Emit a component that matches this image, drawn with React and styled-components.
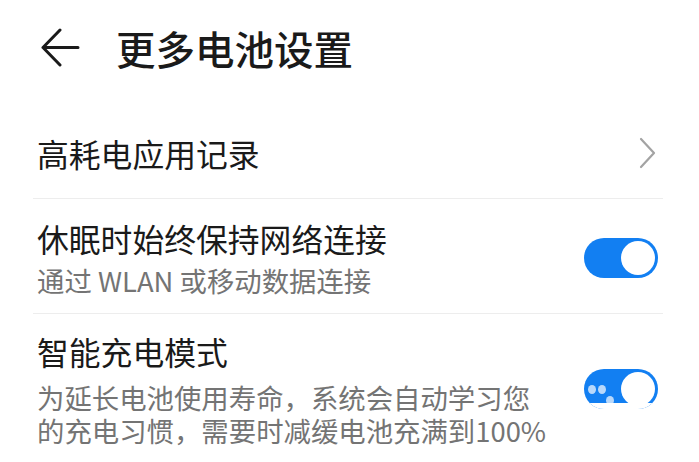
import React from "react";
import styled, { createGlobalStyle } from "styled-components";

const GlobalStyle = createGlobalStyle`
  body {
    margin: 0;
    background: #fff;
    font-family: "Noto Sans CJK SC", "Noto Sans", sans-serif;
  }
`;

const Page = styled.div`
  width: 699px;
  height: 462px;
  overflow: hidden;
  background: #fff;
`;

const Header = styled.header`
  display: flex;
  align-items: center;
  height: 96px;
  padding-left: 40px;
  gap: 36px;
`;

const BackButton = styled.button`
  display: flex;
  border: 0;
  padding: 0;
  background: none;
`;

const Title = styled.h1`
  margin: 0;
  font-size: 39.5px;
  font-weight: 500;
  line-height: 44px;
  color: #1a1a1a;
`;

const List = styled.div`
  margin: 0 36px 0 33px;
`;

const Row = styled.div`
  display: flex;
  align-items: center;
  justify-content: space-between;
  padding: ${(p) => p.$pad};
  padding-left: 4px;
  padding-right: ${(p) => p.$right || 5}px;
  border-bottom: ${(p) => (p.$last ? "none" : "1px solid #ededed")};
`;

const Texts = styled.div`
  display: flex;
  flex-direction: column;
  gap: ${(p) => p.$gap || 0}px;
  max-width: ${(p) => p.$max || 560}px;
`;

const RowTitle = styled.div`
  font-size: 31.8px;
  line-height: 40px;
  color: #1a1a1a;
`;

const RowSub = styled.div`
  font-size: 27.4px;
  line-height: 33px;
  color: #747474;
`;

const Switch = styled.div`
  position: relative;
  flex: none;
  width: 74px;
  height: 40px;
  border-radius: 20px;
  background: #127ff2;
  overflow: hidden;
`;

const Knob = styled.span`
  position: absolute;
  top: 3px;
  right: 3px;
  width: 34px;
  height: 34px;
  border-radius: 50%;
  background: #fff;
`;

const Watermark = styled.span`
  position: absolute;
  left: -4px;
  right: -4px;
  bottom: 0;
  height: 6px;
  background: #fff;
`;

const Dot = styled.span`
  position: absolute;
  width: 8px;
  height: 9px;
  border-radius: 50%;
  background: #b8d8fb;
`;

const Back = () => (
  <svg width="40" height="40" viewBox="0 0 40 40">
    <path
      d="M20 2 L3 19.5 L20 37 M3 19.5 L38 19.5"
      fill="none"
      stroke="#1a1a1a"
      strokeWidth="3"
      strokeLinecap="round"
      strokeLinejoin="round"
    />
  </svg>
);

const Chevron = () => (
  <svg width="18" height="32" viewBox="0 0 18 32">
    <path
      d="M2 2 L15 16 L2 30"
      fill="none"
      stroke="#a3a3a3"
      strokeWidth="2.2"
      strokeLinecap="round"
      strokeLinejoin="round"
    />
  </svg>
);

const Toggle = ({ marked }) => (
  <Switch>
    <Knob />
    {marked && (
      <>
        <Dot style={{ left: 4, top: 16 }} />
        <Dot style={{ left: 14, top: 16 }} />
        <Dot style={{ left: 22, top: 27 }} />
        <Watermark />
      </>
    )}
  </Switch>
);

export default function App() {
  return (
    <Page>
      <GlobalStyle />
      <Header>
        <BackButton>
          <Back />
        </BackButton>
        <Title>更多电池设置</Title>
      </Header>
      <List>
        <Row $pad="37px 0 25px" $right={6}>
          <RowTitle>高耗电应用记录</RowTitle>
          <Chevron />
        </Row>
        <Row $pad="19px 0 16px">
          <Texts $gap={6}>
            <RowTitle>休眠时始终保持网络连接</RowTitle>
            <RowSub>通过 WLAN 或移动数据连接</RowSub>
          </Texts>
          <Toggle />
        </Row>
        <Row $pad="17px 0 16px" $last>
          <Texts $gap={10} $max={520}>
            <RowTitle>智能充电模式</RowTitle>
            <RowSub>为延长电池使用寿命，系统会自动学习您的充电习惯，需要时减缓电池充满到100%</RowSub>
          </Texts>
          <Toggle marked />
        </Row>
      </List>
    </Page>
  );
}
